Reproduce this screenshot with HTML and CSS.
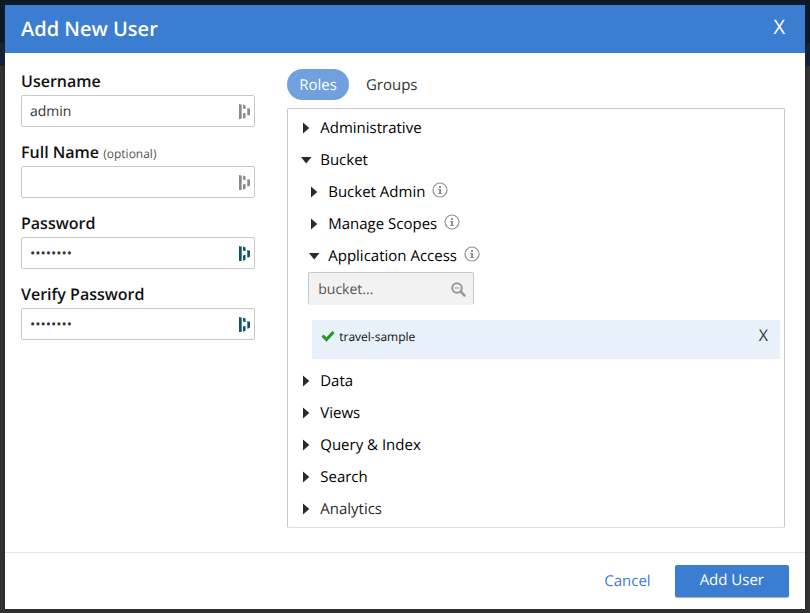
FILE: index.html
```html
<!DOCTYPE html>
<html lang="en">
<head>
<meta charset="utf-8">
<meta name="viewport" content="width=device-width, initial-scale=1">
<title>Add New User</title>
<link rel="stylesheet" href="styles.css">
</head>
<body>
<svg class="defs" width="0" height="0" aria-hidden="true">
  <symbol id="manager" viewBox="0 0 11 15">
    <path d="M0 0 2 .6H2.700v14L2 15H0z"/>
    <path d="M4 .5 6 1.200h.5V5H5.500L4 4.500zM4 9.500l1.500-.5h1V13.500L5 14.500H4zM8.300 4l1.200.5H11v6L9.500 11.500H8.300z"/>
  </symbol>
  <symbol id="info" viewBox="0 0 16 16">
    <circle cx="8" cy="8" r="7" fill="none" stroke="currentColor" stroke-width="1.200"/>
    <path d="M7 4h2v2H7zM6 7h3v4h1v1H6v-1h1V8H6z"/>
  </symbol>
  <symbol id="right" viewBox="0 0 10 12"><path d="M2 .5 8.300 6 2 11.500z"/></symbol>
  <symbol id="down" viewBox="0 0 10 12"><path d="M0 3h10.500L5.200 9.500z"/></symbol>
</svg>
<main class="dialog" role="dialog" aria-labelledby="title">
  <header class="header">
    <h1 id="title">Add New User</h1>
    <button class="close" type="button" aria-label="Close">X</button>
  </header>
  <form class="form">
    <div class="content">
      <section class="fields">
        <div class="field">
          <label for="username">Username</label>
          <div class="control"><input id="username" type="text" value="admin"><svg class="manager"><use href="#manager"/></svg></div>
        </div>
        <div class="field">
          <label for="fullname">Full Name <small>(optional)</small></label>
          <div class="control"><input id="fullname" type="text"><svg class="manager"><use href="#manager"/></svg></div>
        </div>
        <div class="field">
          <label for="password">Password</label>
          <div class="control"><input id="password" type="password" value="password"><svg class="manager filled"><use href="#manager"/></svg></div>
        </div>
        <div class="field">
          <label for="verify">Verify Password</label>
          <div class="control"><input id="verify" type="password" value="password"><svg class="manager filled"><use href="#manager"/></svg></div>
        </div>
      </section>
      <section class="access">
        <nav class="tabs">
          <button class="tab active" type="button">Roles</button>
          <button class="tab" type="button">Groups</button>
        </nav>
        <div class="roles">
          <button class="role" type="button"><svg class="arrow"><use href="#right"/></svg>Administrative</button>
          <button class="role" type="button"><svg class="arrow"><use href="#down"/></svg>Bucket</button>
          <div class="nested">
            <button class="role" type="button"><svg class="arrow"><use href="#right"/></svg>Bucket Admin<svg class="info"><use href="#info"/></svg></button>
            <button class="role" type="button"><svg class="arrow"><use href="#right"/></svg>Manage Scopes<svg class="info"><use href="#info"/></svg></button>
            <button class="role" type="button"><svg class="arrow"><use href="#down"/></svg>Application Access<svg class="info"><use href="#info"/></svg></button>
            <div class="search">
              <input type="text" placeholder="bucket..." aria-label="Bucket">
              <svg class="glass" viewBox="0 0 15 15"><circle cx="6" cy="6" r="4.800" fill="none" stroke="currentColor" stroke-width="2"/><path d="M3.500 6h5" stroke="currentColor"/><path d="m9.500 9.500 4 4" stroke="currentColor" stroke-width="2.500" stroke-linecap="round"/></svg>
            </div>
            <div class="selected">
              <svg class="check" viewBox="0 0 14 12"><path d="m1.500 5.500 4 4 7-7.500" fill="none" stroke="currentColor" stroke-width="3"/></svg>
              <span>travel-sample</span>
              <button class="remove" type="button" aria-label="Remove travel-sample">X</button>
            </div>
          </div>
          <button class="role" type="button"><svg class="arrow"><use href="#right"/></svg>Data</button>
          <button class="role" type="button"><svg class="arrow"><use href="#right"/></svg>Views</button>
          <button class="role" type="button"><svg class="arrow"><use href="#right"/></svg>Query &amp; Index</button>
          <button class="role" type="button"><svg class="arrow"><use href="#right"/></svg>Search</button>
          <button class="role last" type="button"><svg class="arrow"><use href="#right"/></svg>Analytics</button>
        </div>
      </section>
    </div>
    <footer class="footer">
      <a class="cancel" href="#">Cancel</a>
      <button class="submit" type="submit">Add User</button>
    </footer>
  </form>
</main>
</body>
</html>
```

FILE: styles.css
```css
* { box-sizing: border-box; }

body {
  margin: 0;
  padding: 5px 5px 4px;
  min-height: 100vh;
  background: linear-gradient(#0b1929 43px, #14233a 43px, #14233a 66px, #333 66px);
  font: 15px/24px "Open Sans", sans-serif;
  text-rendering: geometricPrecision;
  color: #111;
}

button, input { font: inherit; color: inherit; text-rendering: inherit; }
button { border: 0; padding: 0; background: none; cursor: pointer; }
svg { fill: currentColor; flex: none; }
.defs { position: absolute; }

.dialog { background: #fff; box-shadow: 0 0 4px #222; }

.header {
  display: flex;
  align-items: center;
  justify-content: space-between;
  height: 48px;
  padding: 0 20px 0 16px;
  background: #3a7dd1;
  color: #fff;
}
.header h1 { margin: 0; font-size: 20px; font-weight: 600; }
.close { font-size: 20px; padding-bottom: 4px; }

.content {
  display: grid;
  grid-template-columns: 8fr 17fr;
  gap: 32px;
  padding: 16px 20px 24px 16px;
}

.fields { display: flex; flex-direction: column; gap: 13px; }
.field { display: flex; flex-direction: column; gap: 2px; }
.field label { font-size: 16px; font-weight: 600; }
.field small { font-size: 12px; line-height: 12px; font-weight: 400; color: #555; }
.control { position: relative; display: flex; }
.control input {
  width: 100%;
  height: 32px;
  padding: 0 32px 0 8px;
  border: 1px solid #c8c8c8;
  border-radius: 2px;
  background: #fff;
  font-size: 14px;
  color: #333;
}
.manager { position: absolute; top: 9px; right: 5px; width: 11px; height: 15px; color: #8c8a88; }
.filled { color: #0e5568; }

.tabs { display: flex; gap: 5px; margin-bottom: 8px; }
.tab { height: 31px; padding: 0 12px; border-radius: 16px; color: #333; }
.active { background: #71a0de; color: #fff; }

.roles {
  display: flex;
  flex-direction: column;
  padding: 3px 4px 2px 12px;
  border: 1px solid #c8c8c8;
  border-bottom-color: #ddd;
  border-radius: 2px;
}
.nested { display: flex; flex-direction: column; padding-left: 8px; }
.role { display: flex; align-items: center; height: 32px; text-align: left; color: #000; }
.last { color: #2a2a2a; }
.arrow { width: 10px; height: 12px; margin: 0 9px 0 1px; color: #2a2a2a; overflow: visible; }
.info { width: 16px; height: 16px; margin: 0 0 4px 7px; color: #929292; }

.search { position: relative; display: flex; width: 166px; }
.search input {
  width: 100%;
  height: 33px;
  padding: 1px 32px 0 9px;
  border: 1px solid #c8c8c8;
  border-bottom-color: #f2f2f2;
  border-radius: 2px;
  background: #f2f2f2;
  font-size: 14px;
}
.search input::placeholder { color: #555; opacity: 1; }
.glass { position: absolute; top: 10px; right: 8px; width: 15px; height: 15px; color: #999; }

.selected {
  display: flex;
  align-items: flex-start;
  height: 39px;
  margin: 15px 0 6px 4px;
  padding: 5px 12px 0 9px;
  background: #e8f0f9;
  font-size: 12px;
}
.check { width: 14px; height: 12px; margin: 5px 4px 0 0; color: #229b1c; }
.remove { margin-left: auto; font-size: 16px; line-height: 20px; color: #333; }

.footer {
  display: flex;
  align-items: center;
  justify-content: flex-end;
  gap: 24px;
  padding: 12px 16px;
  border-top: 1px solid #e5e5e5;
}
.cancel { color: #3a7dd1; text-decoration: none; }
.submit {
  height: 32px;
  padding: 0 25px 2px;
  border-radius: 2px;
  background: #3a7dd1;
  box-shadow: 0 1px 1px #aaa;
  color: #fff;
}
```
